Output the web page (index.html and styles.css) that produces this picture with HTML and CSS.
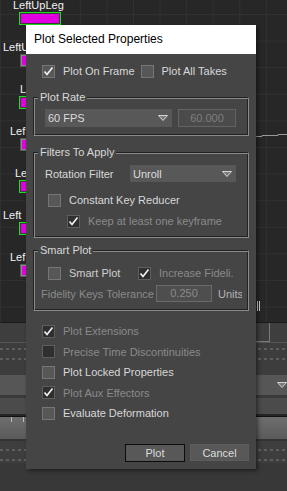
FILE: index.html
```html
<!DOCTYPE html>
<html lang="en">

<head>
  <meta charset="UTF-8">
  <meta name="viewport" content="width=device-width, initial-scale=1.0">
  <title>Plot Selected Properties</title>
  <link rel="stylesheet" href="styles.css">
</head>

<body>
  <!-- 背景：曲线编辑器 + 时间轴 -->
  <div class="app">
    <div class="graph">
      <!-- 轨道名：只保留对话框左边露出的部分 -->
      <ul class="tracks">
        <li class="track t1"><span class="track-name">LeftUpLeg</span><div class="track-bar on short"></div></li>
        <li class="track t2"><span class="track-name">LeftU</span><div class="track-bar"></div></li>
        <li class="track t3"><span class="track-name">L</span><div class="track-bar on"></div></li>
        <li class="track t4"><span class="track-name">Lef</span><div class="track-bar"></div></li>
        <li class="track t5"><span class="track-name">Le</span><div class="track-bar on"></div></li>
        <li class="track t6"><span class="track-name">Left</span><div class="track-bar on"></div></li>
        <li class="track t7"><span class="track-name">Lef</span><div class="track-bar"></div></li>
      </ul>
      <!-- 曲线 -->
      <svg class="curve" width="40" height="4" viewBox="0 0 40 4">
        <polyline points="0,2.5 6,2.5 6,1.5 22,1.5 22,0.5 40,0.5" fill="none" stroke="#9a9a9a" stroke-width="1" />
      </svg>
      <div class="pause-mark"></div>
    </div>

    <div class="timeline">
      <div class="strip strip-a"><div class="range-box"></div></div>
      <div class="strip strip-b"><div class="dash-row"></div><div class="dash-row"></div></div>
      <div class="strip strip-c">
        <svg class="strip-arrow" width="10" height="6" viewBox="0 0 10 6">
          <polygon points="0.5,0.5 9.5,0.5 5,5.5" fill="#7a7a7a" stroke="#d0d0d0" stroke-width="1" />
        </svg>
      </div>
      <div class="strip strip-d"></div>
      <div class="strip strip-e"><span class="tick"></span><span class="tick"></span></div>
      <div class="strip strip-f"><div class="dash-row"></div><div class="dash-row"></div></div>
    </div>
  </div>

  <!-- 对话框 -->
  <div class="dialog">
    <div class="dialog-title">Plot Selected Properties</div>

    <div class="dialog-body">
      <div class="check-line top-line">
        <label class="check-item"><span class="cb"><svg viewBox="0 0 11 11"><path d="M1.5 5.5 L4 8.5 L9.5 1.5" /></svg></span><span class="check-text">Plot On Frame</span></label>
        <label class="check-item"><span class="cb"></span><span class="check-text">Plot All Takes</span></label>
      </div>

      <!-- Plot Rate -->
      <fieldset class="group">
        <legend>Plot Rate</legend>
        <div class="group-row">
          <div class="select rate-select"><span>60 FPS</span>
            <svg class="arrow" viewBox="0 0 10 6"><polygon points="0.5,0.5 9.5,0.5 5,5.5" /></svg>
          </div>
          <div class="field rate-field">60.000</div>
        </div>
      </fieldset>

      <!-- Filters To Apply -->
      <fieldset class="group filters">
        <legend>Filters To Apply</legend>
        <div class="group-row">
          <span class="row-label">Rotation Filter</span>
          <div class="select filter-select"><span>Unroll</span>
            <svg class="arrow" viewBox="0 0 10 6"><polygon points="0.5,0.5 9.5,0.5 5,5.5" /></svg>
          </div>
        </div>
        <label class="check-item reducer"><span class="cb"></span><span class="check-text">Constant Key Reducer</span></label>
        <label class="check-item keep dim"><span class="cb"><svg viewBox="0 0 11 11"><path d="M1.5 5.5 L4 8.5 L9.5 1.5" /></svg></span><span class="check-text">Keep at least one keyframe</span></label>
      </fieldset>

      <!-- Smart Plot -->
      <fieldset class="group smart">
        <legend>Smart Plot</legend>
        <div class="check-line smart-line">
          <label class="check-item smart-item"><span class="cb"></span><span class="check-text">Smart Plot</span></label>
          <label class="check-item dim"><span class="cb"><svg viewBox="0 0 11 11"><path d="M1.5 5.5 L4 8.5 L9.5 1.5" /></svg></span><span class="check-text">Increase Fideli.</span></label>
        </div>
        <div class="group-row tolerance">
          <span class="row-label muted tol-label">Fidelity Keys Tolerance</span>
          <div class="field tol-field">0.250</div>
          <span class="units">Units</span>
        </div>
      </fieldset>

      <!-- 其他选项 -->
      <div class="option-list">
        <label class="check-item dim"><span class="cb"><svg viewBox="0 0 11 11"><path d="M1.5 5.5 L4 8.5 L9.5 1.5" /></svg></span><span class="check-text">Plot Extensions</span></label>
        <label class="check-item dim"><span class="cb"></span><span class="check-text">Precise Time Discontinuities</span></label>
        <label class="check-item"><span class="cb"></span><span class="check-text">Plot Locked Properties</span></label>
        <label class="check-item dim"><span class="cb"><svg viewBox="0 0 11 11"><path d="M1.5 5.5 L4 8.5 L9.5 1.5" /></svg></span><span class="check-text">Plot Aux Effectors</span></label>
        <label class="check-item"><span class="cb"></span><span class="check-text">Evaluate Deformation</span></label>
      </div>

      <div class="buttons">
        <button class="btn default">Plot</button>
        <button class="btn">Cancel</button>
      </div>
    </div>
  </div>
</body>

</html>
```

FILE: styles.css
```css
/* 全局重置 */
* {
  margin: 0;
  padding: 0;
  box-sizing: border-box;
}

body {
  width: 287px;
  height: 491px;
  overflow: hidden;
  position: relative;
  background: #383838;
  font-family: "Liberation Sans", Arial, sans-serif;
  font-size: 11px;
  color: #d8d8d8;
}

/* ---------- 背景 ---------- */
.app {
  display: flex;
  flex-direction: column;
  height: 100%;
}

.graph {
  position: relative;
  height: 322px;
  flex: none;
  background-color: #272727;
  background-image:
    linear-gradient(#313131 1px, transparent 1px),
    linear-gradient(90deg, #313131 1px, transparent 1px);
  background-size: 26.6px 26.6px;
  background-position: 0 14px, 0 0;
}

.tracks {
  list-style: none;
  display: flex;
  flex-direction: column;
  gap: 16px;
  margin-top: -1px;
}

.track {
  display: flex;
  flex-direction: column;
}

.track-name {
  height: 12px;
  line-height: 12px;
  color: #f2f2f2;
  white-space: nowrap;
}

.t1 .track-name { margin-left: 13px; }
.t2 .track-name { margin-left: 3px; }
.t3 .track-name { margin-left: 20px; }
.t4 .track-name { margin-left: 10px; }
.t5 .track-name { margin-left: 15px; }
.t6 .track-name { margin-left: 3px; }
.t7 .track-name { margin-left: 10px; }

/* 轨道色块 */
.track-bar {
  width: 60px;
  height: 13px;
  margin-top: 1px;
  margin-left: 20px;
  background: #e000e0;
  border: 1px solid #5a5a5a;
  box-shadow: inset 0 0 0 1px #8a8a8a;
}

.track-bar.on {
  margin-left: 19px;
  border-color: #1fe01f;
  box-shadow: inset 0 0 0 1px #3c3c3c;
}

.track-bar.short {
  width: 42px;
}

.curve {
  position: absolute;
  left: 256px;
  top: 134px;
}

/* 暂停标记 || */
.pause-mark {
  position: absolute;
  left: 257px;
  top: 301px;
  width: 3px;
  height: 10px;
  border-left: 1px solid #d0d0d0;
  border-right: 1px solid #d0d0d0;
}

/* 时间轴 */
.timeline {
  flex: 1;
  display: flex;
  flex-direction: column;
  border-top: 1px solid #1a1a1a;
}

.strip {
  flex: none;
}

.strip-a {
  height: 19px;
  background: #3e3e3e;
  display: flex;
  justify-content: flex-end;
  padding-right: 17px;
}

.range-box {
  width: 70px;
  height: 19px;
  border: 1px solid #7a7a7a;
  border-top: none;
}

.strip-b {
  height: 33px;
  background: #3d3d3d;
  border-top: 1px solid #565656;
  display: flex;
  flex-direction: column;
  gap: 8px;
  padding-top: 5px;
}

.dash-row {
  height: 2px;
  background: repeating-linear-gradient(90deg, #5e5e5e 0 3px, transparent 3px 6px);
}

.strip-c {
  height: 20px;
  background: #565656;
  display: flex;
  justify-content: flex-end;
  align-items: center;
}

.strip-d {
  height: 21px;
  background: #4b4b4b;
  border-top: 3px solid #3a3a3a;
  border-bottom: 2px solid #262626;
}

.strip-e {
  height: 25px;
  background: linear-gradient(#6e6e6e, #5a5a5a);
  border-top: 1px solid #111;
  border-bottom: 2px solid #333;
  display: flex;
  gap: 11px;
  padding-left: 11px;
}

.tick {
  width: 1px;
  height: 5px;
  background: #bdbdbd;
}

.strip-f {
  height: 22px;
  background: #3e3e3e;
  display: flex;
  flex-direction: column;
  gap: 8px;
  padding-top: 8px;
}

/* ---------- 对话框 ---------- */
.dialog {
  position: absolute;
  left: 26px;
  top: 25px;
  width: 230px;
  height: 444px;
  background: #454545;
  box-shadow: 2px 2px 4px rgba(0, 0, 0, 0.45);
  display: flex;
  flex-direction: column;
}

.dialog-title {
  height: 29px;
  line-height: 29px;
  background: #FFFFFF;
  color: #000;
  font-size: 12px;
  padding-left: 8px;
}

.dialog-body {
  padding: 9px 7px 0;
  display: flex;
  flex-direction: column;
}

/* 复选框 */
.check-line {
  display: flex;
  gap: 6px;
}

.top-line {
  padding-left: 9px;
}

.check-item {
  display: flex;
  align-items: center;
  gap: 8px;
  height: 16px;
  white-space: nowrap;
}

.cb {
  flex: none;
  width: 13px;
  height: 13px;
  border: 1px solid #767676;
  background: #575757;
  display: flex;
  align-items: center;
  justify-content: center;
}

.cb svg {
  width: 11px;
  height: 11px;
}

.cb path {
  fill: none;
  stroke: #f0f0f0;
  stroke-width: 1.7;
}

.dim .cb {
  background: #2f2f2f;
  border-color: #5e5e5e;
}

.dim .check-text {
  color: #8a8a8a;
}

/* 分组框 */
.group {
  border: 1px solid;
  border-color: #222 #8a8a8a #8a8a8a #222;
  box-shadow: inset 1px 1px 0 #8a8a8a, inset -1px -1px 0 #222;
  padding: 6px 4px 8px;
  margin-top: 12px;
  min-inline-size: 0;
}

.group legend {
  padding: 0 2px;
  line-height: 12px;
  height: 12px;
  background: #454545;
  color: #d8d8d8;
}

.group-row {
  display: flex;
  align-items: center;
  gap: 6px;
  padding: 0 7px;
}

.select {
  height: 18px;
  background: #585858;
  display: flex;
  align-items: center;
  justify-content: space-between;
  padding: 0 4px 0 3px;
  color: #dcdcdc;
}

.arrow {
  width: 10px;
  height: 6px;
}

.arrow polygon {
  fill: #7c7c7c;
  stroke: #d4d4d4;
  stroke-width: 1;
}

.rate-select {
  width: 127px;
}

.field {
  height: 18px;
  line-height: 16px;
  border: 1px solid #636363;
  background: #4b4b4b;
  color: #7e7e7e;
  text-align: center;
}

.rate-field {
  width: 58px;
}

.filters {
  margin-top: 10px;
  padding-top: 7px;
}

.filters .group-row {
  gap: 0;
}

.row-label {
  white-space: nowrap;
}

.filters .row-label {
  width: 85px;
}

.filter-select {
  width: 106px;
  height: 17px;
}

.reducer {
  margin-top: 10px;
  padding-left: 10px;
}

.keep {
  margin-top: 5px;
  padding-left: 29px;
}

.smart {
  margin-top: 6px;
  padding-top: 9px;
}

.smart-line {
  padding-left: 10px;
  gap: 0;
}

.smart-item {
  width: 90px;
}

.smart-item .check-text {
  color: #cfcfcf;
}

.tolerance {
  margin-top: 4px;
  padding-left: 3px;
  padding-right: 0;
  gap: 0;
}

.muted {
  color: #8a8a8a;
}

.tol-label {
  width: 113px;
  margin-right: 2px;
  overflow: hidden;
}

.tol-field {
  width: 56px;
  height: 17px;
  line-height: 15px;
  background: #4e4e4e;
  border-color: #6a6a6a;
  color: #8a8a8a;
}

.units {
  width: 24px;
  margin-left: 6px;
  overflow: hidden;
  white-space: nowrap;
  color: #b4b4b4;
}

/* 选项列表 */
.option-list {
  display: flex;
  flex-direction: column;
  gap: 4.5px;
  margin-top: 12px;
  padding-left: 9px;
}

/* 按钮 */
.buttons {
  display: flex;
  justify-content: flex-end;
  gap: 5px;
  margin-top: 23px;
}

.btn {
  width: 59px;
  height: 17px;
  background: #585858;
  border: 1px solid #5c5c5c;
  color: #dcdcdc;
  font-family: "Liberation Sans", Arial, sans-serif;
  font-size: 11px;
}

.btn.default {
  width: 60px;
  height: 18px;
  border-color: #0c0c0c;
}
```
